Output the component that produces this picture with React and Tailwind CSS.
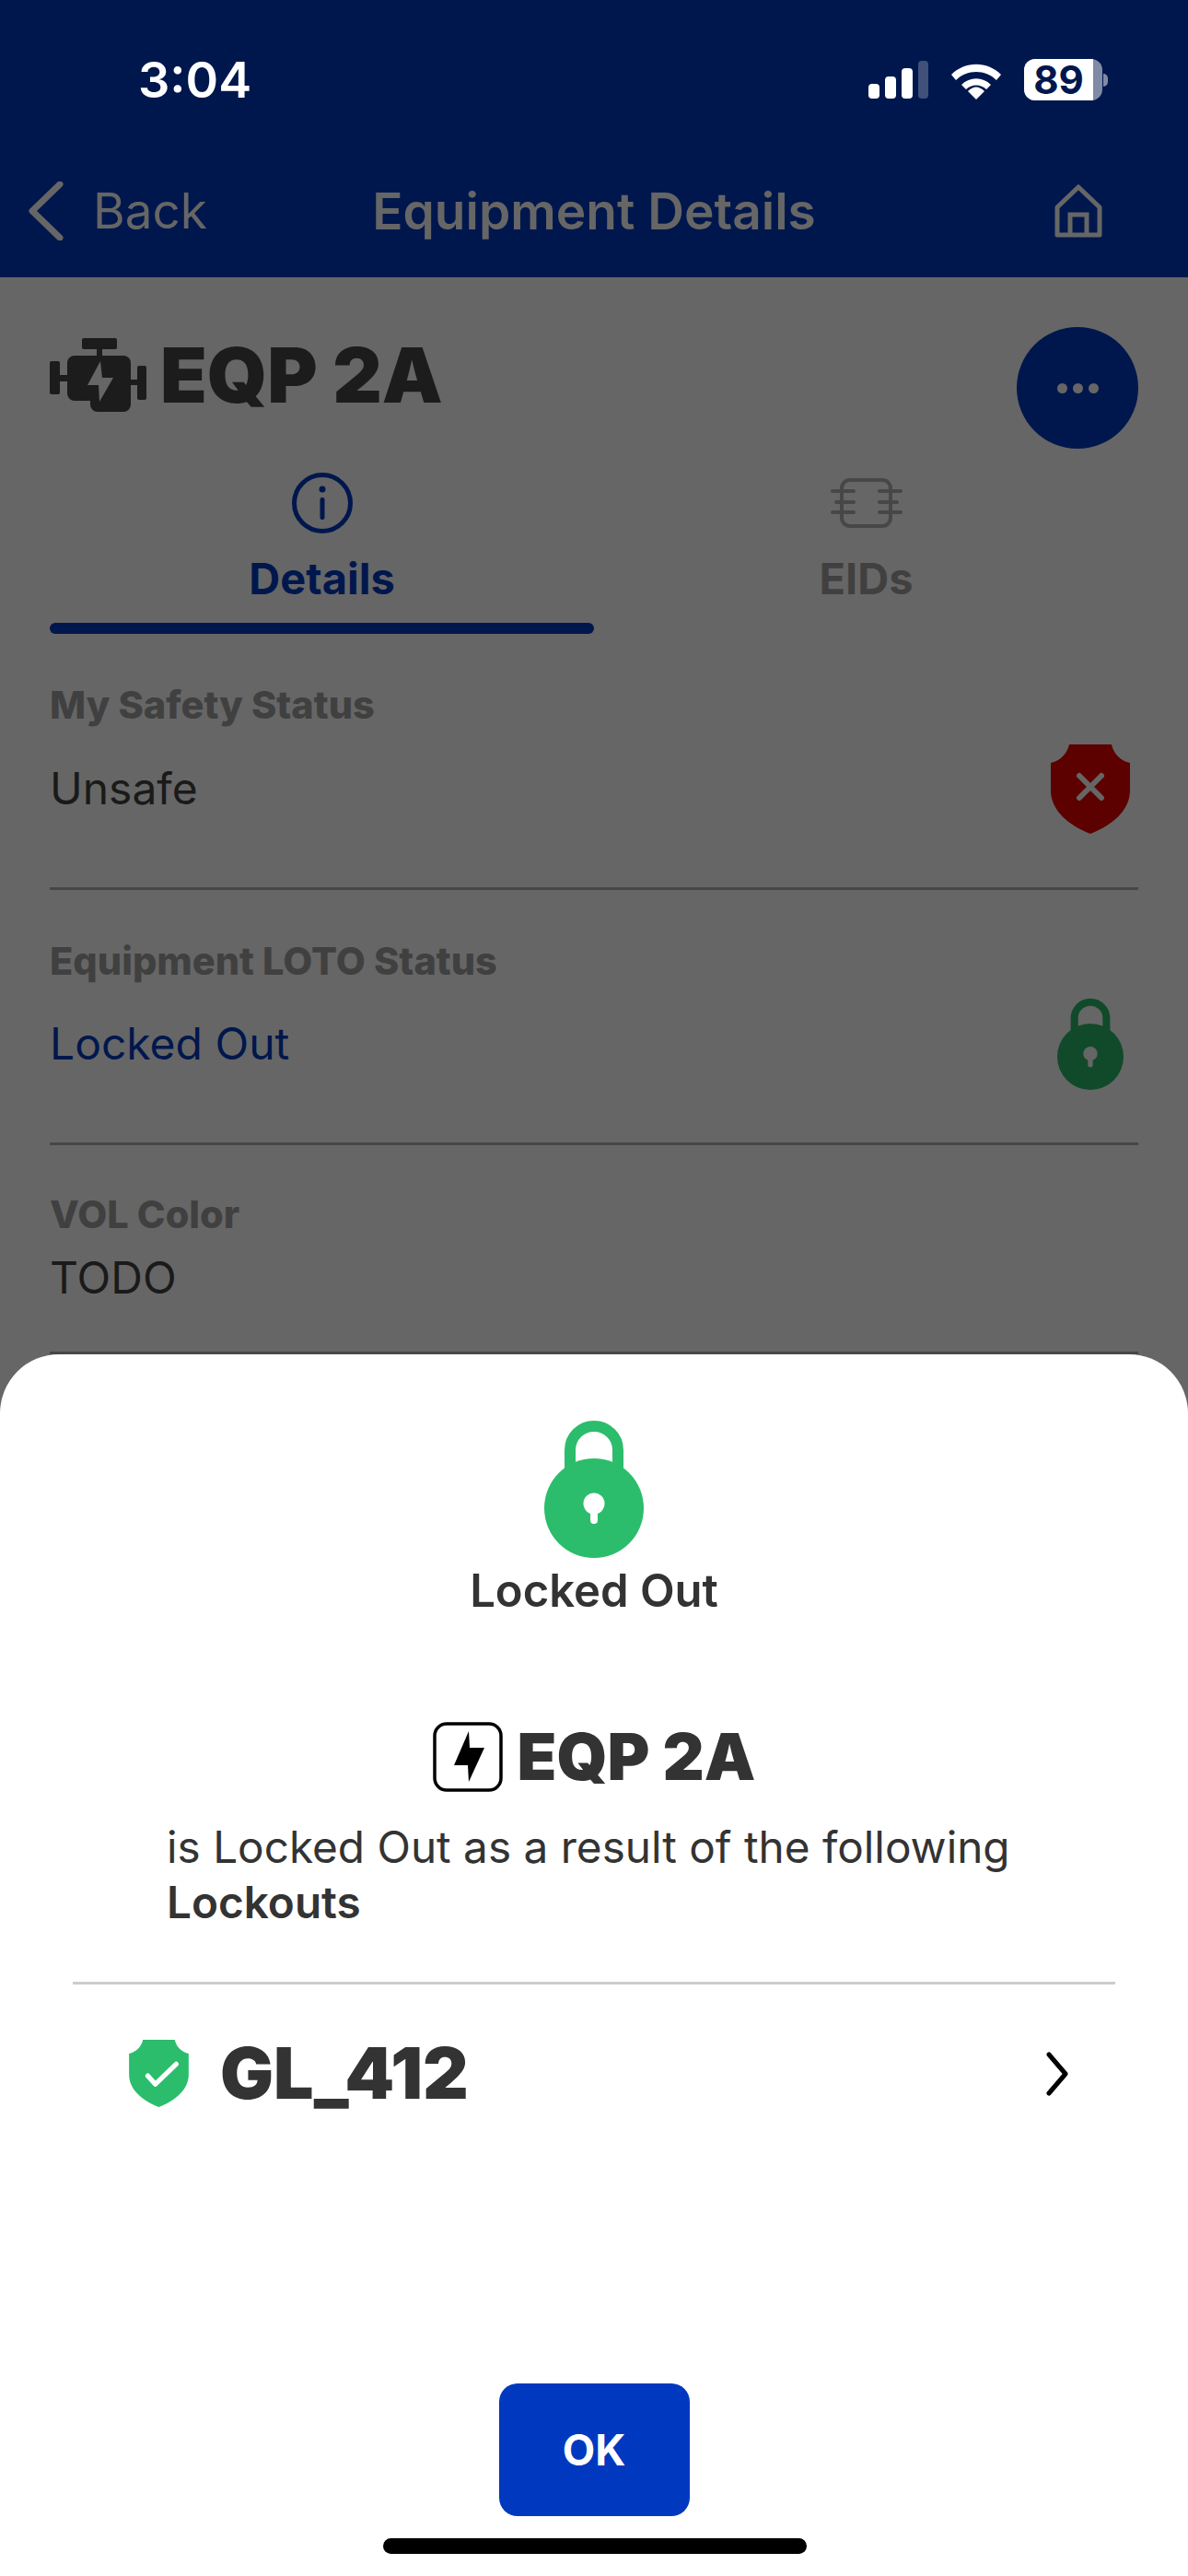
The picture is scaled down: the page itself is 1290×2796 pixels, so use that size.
const FONT = "font-['Inter','Noto_Sans',sans-serif]";

function Shield({ fill, className, children }) {
  return (
    <svg viewBox="0 0 86 97" className={className}>
      <path
        d="M20 0H66C68 10 76 18 86 20V50C86 72 66 88 43 97C20 88 0 72 0 50V20C10 18 18 10 20 0Z"
        fill={fill}
      />
      {children}
    </svg>
  );
}

function Lock({ fill, hole, className }) {
  return (
    <svg viewBox="0 0 108 150" className={className}>
      <path d="M28 62V33A26 26 0 0 1 80 33V62" fill="none" stroke={fill} strokeWidth="12" />
      <circle cx="54" cy="96" r="54" fill={fill} />
      <circle cx="54" cy="91" r="11.5" fill={hole} />
      <rect x="50" y="95" width="8" height="18" rx="4" fill={hole} />
    </svg>
  );
}

function StatusIcons() {
  return (
    <div className="flex items-center">
      <svg viewBox="0 0 65 41" className="h-[41px] w-[65px]">
        <rect x="0" y="25" width="12" height="16" rx="4" fill="#fff" />
        <rect x="18" y="17" width="12" height="24" rx="4" fill="#fff" />
        <rect x="36" y="8" width="12" height="33" rx="4" fill="#fff" />
        <rect x="54" y="0" width="11" height="41" rx="4" fill="#fff" fillOpacity="0.25" />
      </svg>
      <svg viewBox="0 0 56 42" className="ml-[24px] h-[42px] w-[56px]">
        <path d="M1 15C16 0 40 0 55 15L50 21C38 9 18 9 6 21Z" fill="#fff" />
        <path d="M12 26C21 17 35 17 44 26L39 31C33 25 23 25 17 31Z" fill="#fff" />
        <path d="M19 33C25 27 31 27 37 33L28 42Z" fill="#fff" />
      </svg>
      <div className="ml-[24px] flex items-center">
        <div className="flex h-[45px] w-[85px] rounded-[12px] bg-white/50">
          <div className="flex h-full w-[75px] items-center justify-center rounded-l-[12px] bg-white text-[42px] leading-none font-bold text-[#00174d]">
            89
          </div>
        </div>
        <div className="ml-[1px] h-[14px] w-[5px] rounded-r-full bg-white/50" />
      </div>
    </div>
  );
}

function EngineIcon() {
  return (
    <svg viewBox="23 27 105 81" className="h-[81px] w-[105px] shrink-0">
      <g fill="#1c1c1c">
        <rect x="58" y="27" width="38" height="12" rx="2" />
        <rect x="74" y="38" width="6" height="10" />
        <rect x="42" y="46" width="69" height="49" rx="8" />
        <rect x="67" y="70" width="44" height="37" rx="8" />
        <rect x="23" y="52" width="11" height="36" rx="2" />
        <rect x="33" y="67" width="10" height="7" />
        <rect x="118" y="57" width="10" height="37" rx="2" />
        <rect x="110" y="72" width="9" height="6" />
      </g>
      <polygon points="78,52 64,78 76,78 77,96 92,70 80,70" fill="#666666" />
    </svg>
  );
}

function Row({ label, value, valueClass, icon, padding, gap }) {
  return (
    <div className={`border-b-[3px] border-[#474747] ${padding}`}>
      <div className="text-[41.5px] leading-none font-extrabold text-[#404040]">{label}</div>
      <div className={`flex items-center justify-between ${gap}`}>
        <span className={`text-[48px] leading-none ${valueClass}`}>{value}</span>
        {icon}
      </div>
    </div>
  );
}

export default function App() {
  return (
    <div className={`relative h-[2796px] w-[1290px] overflow-hidden bg-[#666666] ${FONT}`}>
      {/* Header */}
      <header className="h-[301px] bg-[#00174d]">
        <div className="flex h-[157px] items-center justify-between pt-[16px] pr-[87px] pl-[150px]">
          <span className="text-[54px] leading-none font-semibold text-white">3:04</span>
          <StatusIcons />
        </div>
        <div className="grid h-[144px] grid-cols-[1fr_auto_1fr] items-center px-[30px] text-[#666666]">
          <div className="flex items-center">
            <svg viewBox="0 0 40 64" className="h-[64px] w-[40px]">
              <polyline
                points="35,3 5,32 35,61"
                fill="none"
                stroke="#666666"
                strokeWidth="7"
                strokeLinecap="round"
                strokeLinejoin="round"
              />
            </svg>
            <span className="ml-[31px] text-[53px] leading-none">Back</span>
          </div>
          <h1 className="text-[55px] leading-none font-semibold">Equipment Details</h1>
          <div className="flex justify-end pr-[63px]">
            <svg viewBox="0 0 52 58" className="h-[58px] w-[52px]">
              <path
                d="M26 3L3 25V55H49V25Z"
                fill="none"
                stroke="#666666"
                strokeWidth="5"
                strokeLinejoin="round"
              />
              <path d="M17 55V33H35V55" fill="none" stroke="#666666" strokeWidth="5" />
            </svg>
          </div>
        </div>
      </header>

      {/* Equipment details */}
      <main className="px-[54px] pt-[54px]">
        <div className="flex items-center justify-between">
          <div className="mb-[28px] flex items-center">
            <EngineIcon />
            <span className="ml-[15px] text-[83px] leading-none font-black text-[#1c1c1c]">
              EQP 2A
            </span>
          </div>
          <button className="flex h-[132px] w-[132px] items-center justify-center gap-[6px] rounded-full bg-[#00174d]">
            <span className="h-[11px] w-[11px] rounded-full bg-[#666666]" />
            <span className="h-[11px] w-[11px] rounded-full bg-[#666666]" />
            <span className="h-[11px] w-[11px] rounded-full bg-[#666666]" />
          </button>
        </div>

        <div className="mt-[26px] grid grid-cols-2">
          <div className="flex flex-col items-center">
            <svg viewBox="0 0 66 66" className="h-[66px] w-[66px]">
              <circle cx="33" cy="33" r="30.5" fill="none" stroke="#00174d" strokeWidth="5" />
              <circle cx="33" cy="18" r="3.5" fill="#00174d" />
              <rect x="30.5" y="27" width="5" height="24" rx="2" fill="#00174d" />
            </svg>
            <span className="mt-[25px] text-[47px] leading-none font-bold text-[#00174d]">Details</span>
            <div className="mt-[25px] h-[12px] w-full rounded-full bg-[#00174d]" />
          </div>
          <div className="flex flex-col items-center">
            <div className="flex h-[66px] items-center">
              <svg viewBox="0 0 78 54" className="h-[54px] w-[78px]">
                <g fill="none" stroke="#474747" strokeWidth="4" strokeLinecap="round">
                  <rect x="12" y="2" width="53" height="50" rx="9" />
                  <path d="M2 14H25M6 26H25M2 37H25M53 14H76M53 26H72M53 37H76" />
                </g>
              </svg>
            </div>
            <span className="mt-[25px] text-[47px] leading-none font-bold text-[#404040]">EIDs</span>
          </div>
        </div>

        <Row
          label="My Safety Status"
          value="Unsafe"
          valueClass="text-[#1a1a1a]"
          padding="pt-[57px] pb-[58px]"
          gap="mt-[21px]"
          icon={
            <Shield fill="#5c0000" className="mr-[9px] h-[97px] w-[86px]">
              <path
                d="M31 34L55 58M55 34L31 58"
                stroke="#666666"
                strokeWidth="6"
                strokeLinecap="round"
              />
            </Shield>
          }
        />
        <Row
          label="Equipment LOTO Status"
          value="Locked Out"
          valueClass="text-[#00174d]"
          padding="pt-[57px] pb-[57px]"
          gap="mt-[19px]"
          icon={<Lock fill="#104a2a" hole="#666666" className="mr-[16px] h-[100px] w-[72px]" />}
        />
        <div className="border-b-[3px] border-[#474747] pt-[55px] pb-[56px]">
          <div className="text-[41.5px] leading-none font-extrabold text-[#404040]">VOL Color</div>
          <div className="mt-[23px] text-[48px] leading-none text-[#1a1a1a]">TODO</div>
        </div>
      </main>

      {/* Bottom sheet */}
      <section className="absolute inset-x-0 top-[1470px] bottom-0 flex flex-col items-center rounded-t-[64px] bg-white pt-[71px] pb-[65px] text-[#333333]">
        <Lock fill="#2bbd6b" hole="#ffffff" className="h-[150px] w-[108px]" />
        <div className="mt-[11px] text-[49px] leading-none font-semibold">Locked Out</div>

        <div className="mt-[118px] flex items-center">
          <svg viewBox="0 0 76 76" className="h-[76px] w-[76px]">
            <rect x="2" y="2" width="72" height="72" rx="13" fill="none" stroke="#000" strokeWidth="3.5" />
            <polygon points="39,10 23,47 38,47 39,65 56,28 40,28" fill="#000" />
          </svg>
          <span className="ml-[16px] text-[70px] leading-none font-black">EQP 2A</span>
        </div>

        <p className="mt-[30px] w-full pl-[181px] text-[47.7px] leading-[60px]">
          is Locked Out as a result of the following
          <br />
          <span className="font-semibold">Lockouts</span>
        </p>

        <div className="mt-[56px] h-[3px] w-[1132px] bg-[#cccccc]" />

        <div className="mt-[58px] flex w-full items-center justify-between pr-[129px] pl-[140px]">
          <div className="flex items-center">
            <Shield fill="#2bbd6b" className="h-[73px] w-[65px]">
              <path
                d="M27 52L38 64L68 35"
                fill="none"
                stroke="#ffffff"
                strokeWidth="7"
                strokeLinecap="round"
                strokeLinejoin="round"
              />
            </Shield>
            <span className="ml-[34px] text-[77px] leading-none font-black">GL_412</span>
          </div>
          <svg viewBox="0 0 26 48" className="h-[48px] w-[26px]">
            <polyline
              points="4,3 22,24 4,45"
              fill="none"
              stroke="#000"
              strokeWidth="5"
              strokeLinecap="round"
              strokeLinejoin="round"
            />
          </svg>
        </div>

        <button className="mt-auto flex h-[144px] w-[207px] items-center justify-center rounded-[20px] bg-[#0039bf] text-[46px] font-bold text-white">
          OK
        </button>
      </section>

      {/* Home indicator */}
      <div className="absolute bottom-[24px] left-[416px] h-[17px] w-[460px] rounded-full bg-black" />
    </div>
  );
}
